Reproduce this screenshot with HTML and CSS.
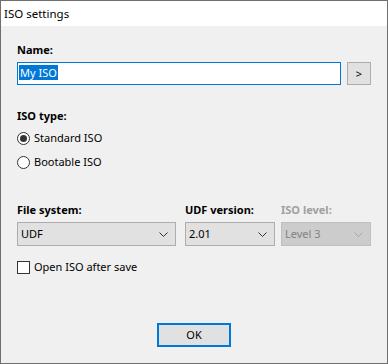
FILE: index.html
```html
<!DOCTYPE html>
<html lang="en">
<head>
  <meta charset="UTF-8">
  <title>ISO settings</title>
  <link rel="stylesheet" href="styles.css">
</head>
<body>
<div class="window">
  <header class="titlebar">ISO settings</header>
  <main class="content">
    <div class="field">
      <label class="field-label">Name:</label>
      <div class="name-row">
        <div class="textbox"><span class="selected">My ISO</span></div>
        <button class="btn btn-small">&gt;</button>
      </div>
    </div>

    <div class="group">
      <div class="field-label">ISO type:</div>
      <label class="radio-row"><span class="radio checked"></span>Standard ISO</label>
      <label class="radio-row"><span class="radio"></span>Bootable ISO</label>
    </div>

    <div class="selects">
      <div class="select-col">
        <div class="field-label">File system:</div>
        <div class="combo combo-wide">UDF<svg class="chev" width="9" height="5" viewBox="0 0 9 5"><path d="M0.5 0.5 L4.5 4.5 L8.5 0.5" fill="none" stroke="#333" stroke-width="1"/></svg></div>
      </div>
      <div class="select-col">
        <div class="field-label">UDF version:</div>
        <div class="combo">2.01<svg class="chev" width="9" height="5" viewBox="0 0 9 5"><path d="M0.5 0.5 L4.5 4.5 L8.5 0.5" fill="none" stroke="#333" stroke-width="1"/></svg></div>
      </div>
      <div class="select-col">
        <div class="field-label disabled">ISO level:</div>
        <div class="combo combo-disabled">Level 3<svg class="chev" width="9" height="5" viewBox="0 0 9 5"><path d="M0.5 0.5 L4.5 4.5 L8.5 0.5" fill="none" stroke="#a6a6a6" stroke-width="1"/></svg></div>
      </div>
    </div>

    <label class="check-row"><span class="checkbox"></span>Open ISO after save</label>

    <div class="actions">
      <button class="btn btn-default">OK</button>
    </div>
  </main>
</div>
</body>
</html>
```

FILE: styles.css
```css
body {
  margin: 0;
  font: 11px/16px "Noto Sans", "Liberation Sans", sans-serif;
  color: #000;
}
.window {
  width: 388px;
  height: 364px;
  box-sizing: border-box;
  border: 1px solid #6f6f6f;
  background-color: #f0f0f0;
  display: flex;
  flex-direction: column;
}
.titlebar {
  height: 25px;
  background-color: #fff;
  padding: 5px 0 0 3px;
  box-sizing: border-box;
  font-size: 11.5px;
}
.content {
  flex-grow: 1;
  padding: 16px 16px 16px;
  display: flex;
  flex-direction: column;
}
.field-label {
  font-weight: bold;
  display: block;
  margin-bottom: 4px;
}
.field-label.disabled {
  color: #a0a0a0;
}
.name-row {
  display: flex;
  gap: 6px;
}
.textbox {
  flex-grow: 1;
  height: 23px;
  box-sizing: border-box;
  border: 1px solid #0078d7;
  background-color: #fff;
  padding: 2px 1px;
}
.selected {
  display: inline-block;
  background-color: #0078d7;
  color: #fff;
  line-height: 15px;
  padding: 0 1px;
}
.btn {
  font: inherit;
  color: #000;
  background-color: #e1e1e1;
  border: 1px solid #adadad;
  box-sizing: border-box;
  padding: 0;
}
.btn-small {
  width: 24px;
  height: 23px;
}
.group {
  margin-top: 23px;
}
.group .field-label {
  margin-bottom: 2px;
}
.radio-row {
  display: flex;
  align-items: center;
  height: 24px;
}
.radio {
  width: 13px;
  height: 13px;
  box-sizing: border-box;
  border: 1px solid #333;
  border-radius: 50%;
  background-color: #fff;
  margin-right: 4px;
  position: relative;
}
.radio.checked::after {
  content: '';
  position: absolute;
  left: 2px; top: 2px;
  width: 7px;
  height: 7px;
  border-radius: 50%;
  background-color: #333;
}
.selects {
  margin-top: 28px;
  display: grid;
  grid-template-columns: 168px 96px 90px;
}
.combo {
  width: 90px;
  height: 24px;
  box-sizing: border-box;
  border: 1px solid #adadad;
  background-color: #e1e1e1;
  display: flex;
  align-items: center;
  justify-content: space-between;
  padding: 0 7px 0 3px;
}
.combo-wide {
  width: 159px;
}
.combo-disabled {
  background-color: #cccccc;
  border-color: #bfbfbf;
  color: #838383;
}
.chev {
  display: block;
}
.check-row {
  margin-top: 13px;
  display: flex;
  align-items: center;
}
.checkbox {
  width: 13px;
  height: 13px;
  box-sizing: border-box;
  border: 1px solid #333;
  background-color: #fff;
  margin-right: 4px;
}
.actions {
  margin-top: auto;
  display: flex;
  justify-content: center;
}
.btn-default {
  width: 74px;
  height: 24px;
  border: 2px solid #0078d7;
}
```
